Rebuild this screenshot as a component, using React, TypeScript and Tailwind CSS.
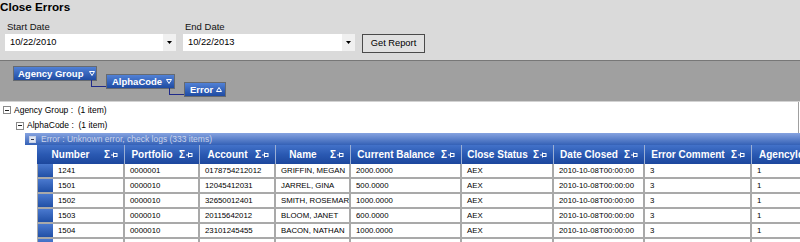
import React from "react";

const cols = [
  { label: "Number", head: "w-[88px]", cell: "w-[72px]" },
  { label: "Portfolio", head: "w-[75px]", cell: "w-[75px]" },
  { label: "Account", head: "w-[76px]", cell: "w-[76px]" },
  { label: "Name", head: "w-[75px]", cell: "w-[75px]" },
  { label: "Current Balance", head: "w-[111px]", cell: "w-[111px]" },
  { label: "Close Status", head: "w-[92px]", cell: "w-[92px]" },
  { label: "Date Closed", head: "w-[91px]", cell: "w-[91px]" },
  { label: "Error Comment", head: "w-[107px]", cell: "w-[107px]" },
  { label: "AgencyId", head: "w-[80px]", cell: "w-[80px]" },
];

const rows = [
  ["1241", "0000001", "0178754212012", "GRIFFIN, MEGAN", "2000.0000", "AEX", "2010-10-08T00:00:00", "3", "1"],
  ["1501", "0000010", "12045412031", "JARREL, GINA", "500.0000", "AEX", "2010-10-08T00:00:00", "3", "1"],
  ["1502", "0000010", "32650012401", "SMITH, ROSEMARY", "1000.0000", "AEX", "2010-10-08T00:00:00", "3", "1"],
  ["1503", "0000010", "20115642012", "BLOOM, JANET", "600.0000", "AEX", "2010-10-08T00:00:00", "3", "1"],
  ["1504", "0000010", "23101245455", "BACON, NATHAN", "1000.0000", "AEX", "2010-10-08T00:00:00", "3", "1"],
  ["", "", "", "", "", "", "", "", ""],
];

function DateInput({ label, value, w }: { label: string; value: string; w: string }) {
  return (
    <div className={`${w} shrink-0 flex flex-col`}>
      <div className="h-[12px] leading-[12px] pl-[2px] text-[9.5px] text-[#111]">{label}</div>
      <div className="mt-[1px] h-[17px] bg-white flex items-stretch">
        <div className="flex-1 pl-[5px] pt-[1px] flex items-center text-[9.3px] leading-none text-black">{value}</div>
        <div className="w-[13px] bg-[#f0f0f0] flex items-center justify-center">
          <svg width="5" height="3" viewBox="0 0 5 3">
            <polygon points="0,0 5,0 2.5,3" fill="#000" />
          </svg>
        </div>
      </div>
    </div>
  );
}

function Tri({ up }: { up?: boolean }) {
  return (
    <svg width="6" height="5" viewBox="0 0 6 5" className="shrink-0">
      <polygon
        points={up ? "0.5,4.5 5.5,4.5 3,0.5" : "0.5,0.5 5.5,0.5 3,4.5"}
        fill="none"
        stroke="#ffffff"
        strokeWidth="1"
      />
    </svg>
  );
}

function Minus({ tone }: { tone?: "bar" }) {
  return (
    <div
      className={
        tone === "bar"
          ? "w-[7px] h-[7px] shrink-0 border border-[#c9d2e6] bg-[#dfe5f2] flex items-center justify-center"
          : "w-[8px] h-[8px] shrink-0 border border-[#8a8a8a] bg-white flex items-center justify-center"
      }
    >
      <div className={tone === "bar" ? "w-[3px] h-[1px] bg-[#334]" : "w-[4px] h-[1px] bg-[#222]"} />
    </div>
  );
}

function Pin() {
  return (
    <svg width="7" height="6" viewBox="0 0 7 6" className="shrink-0 ml-[1px] mr-[6px]">
      <line x1="0" y1="3" x2="2" y2="3" stroke="#fff" strokeWidth="1" />
      <line x1="2.5" y1="0.5" x2="2.5" y2="5.5" stroke="#fff" strokeWidth="1" />
      <rect x="2.5" y="1.5" width="3.5" height="3" fill="none" stroke="#fff" strokeWidth="1" />
    </svg>
  );
}

export default function App() {
  return (
    <div className="w-[800px] h-[242px] overflow-hidden bg-white flex flex-col font-['Liberation_Sans',Arial,sans-serif]">
      {/* Top filter panel */}
      <div className="h-[60px] shrink-0 bg-[#dadada] flex flex-col">
        <div className="h-[14px] leading-[14px] text-[11.7px] font-bold text-black">Close Errors</div>
        <div className="mt-[7px] pl-[5px] flex items-start">
          <DateInput label="Start Date" value="10/22/2010" w="w-[171px]" />
          <div className="ml-[7px]">
            <DateInput label="End Date" value="10/22/2013" w="w-[172px]" />
          </div>
          <button className="ml-[7px] mt-[13px] w-[63px] h-[19px] border border-[#4a4a4a] bg-[#e1e1e1] text-[9.3px] leading-none text-black pt-[1px] flex items-center justify-center">
            Get Report
          </button>
        </div>
      </div>

      {/* Group panel */}
      <div className="h-[42px] shrink-0 bg-[#a0a0a0] border-t border-b border-t-[#777777] border-b-[#d2d2d2] pt-[5px] pl-[13px] flex items-start">
        <div className="relative w-[84px] h-[15px] border border-[#666a70] bg-linear-to-b from-[#5181d6] to-[#1f4ba2] flex items-center justify-between pl-[4px] pr-[1px] text-white font-bold text-[9.5px] leading-none">
          <span>Agency Group</span>
          <Tri />
          <span className="absolute left-[77px] top-full w-[15px] h-[7px] border-l border-b border-[#1f2a8a]" />
        </div>
        <div className="relative ml-[9px] mt-[8px] w-[69px] h-[15px] border border-[#666a70] bg-linear-to-b from-[#5181d6] to-[#1f4ba2] flex items-center justify-between pl-[5px] pr-[2px] text-white font-bold text-[9.5px] leading-none">
          <span>AlphaCode</span>
          <Tri />
          <span className="absolute left-[62px] top-full w-[15px] h-[7px] border-l border-b border-[#1f2a8a]" />
        </div>
        <div className="ml-[9px] mt-[16px] w-[42px] h-[15px] border border-[#666a70] bg-linear-to-b from-[#5181d6] to-[#1f4ba2] flex items-center justify-between pl-[5px] pr-[3px] text-white font-bold text-[9.5px] leading-none">
          <span>Error</span>
          <Tri up />
        </div>
      </div>

      {/* Grid */}
      <div className="flex-1 flex flex-col text-[8.5px] leading-none text-black">
        <div className="w-[799px] border-r border-[#a0a0a0]">
          <div className="h-[16px] flex items-center pl-[3px]">
            <Minus />
            <span className="ml-[3px] whitespace-pre">Agency Group :  (1 item)</span>
          </div>
          <div className="h-[15px] flex items-center pl-[16px]">
            <Minus />
            <span className="ml-[3px] whitespace-pre">AlphaCode :  (1 item)</span>
          </div>
        </div>
        <div className="ml-[25px] h-[12px] shrink-0 bg-linear-to-b from-[#86a3e0] to-[#3461b6] flex items-center pl-[4px] text-[#c9d3ea]">
          <Minus tone="bar" />
          <span className="ml-[5px] whitespace-nowrap">Error : Unknown error, check logs (333 items)</span>
        </div>
        <div className="ml-[37px] flex flex-col">
          <div className="h-[19px] flex bg-linear-to-b from-[#4372c9] via-[#2a59b2] to-[#1c479d] text-white font-bold text-[10px] leading-none">
            {cols.map((c) => (
              <div key={c.label} className={`${c.head} shrink-0 h-full flex items-center border-r border-[#9aaed4]`}>
                <span className="flex-1 text-center whitespace-nowrap overflow-hidden">{c.label}</span>
                <span className="text-[10px] font-bold leading-none">Σ</span>
                <Pin />
              </div>
            ))}
          </div>
          {rows.map((r, ri) => (
            <div key={ri} className="h-[15px] flex text-[7.8px] leading-none">
              <div className="w-[16px] shrink-0 border-b-2 border-l border-[#a9a9a9] bg-linear-to-b from-[#4a79cf] to-[#2150a6]" />
              {r.map((v, ci) => (
                <div
                  key={ci}
                  className={`${cols[ci].cell} shrink-0 border-r-2 border-b-2 border-[#a9a9a9] pl-[5px] flex items-center overflow-hidden whitespace-nowrap`}
                >
                  {v}
                </div>
              ))}
            </div>
          ))}
        </div>
      </div>
    </div>
  );
}
